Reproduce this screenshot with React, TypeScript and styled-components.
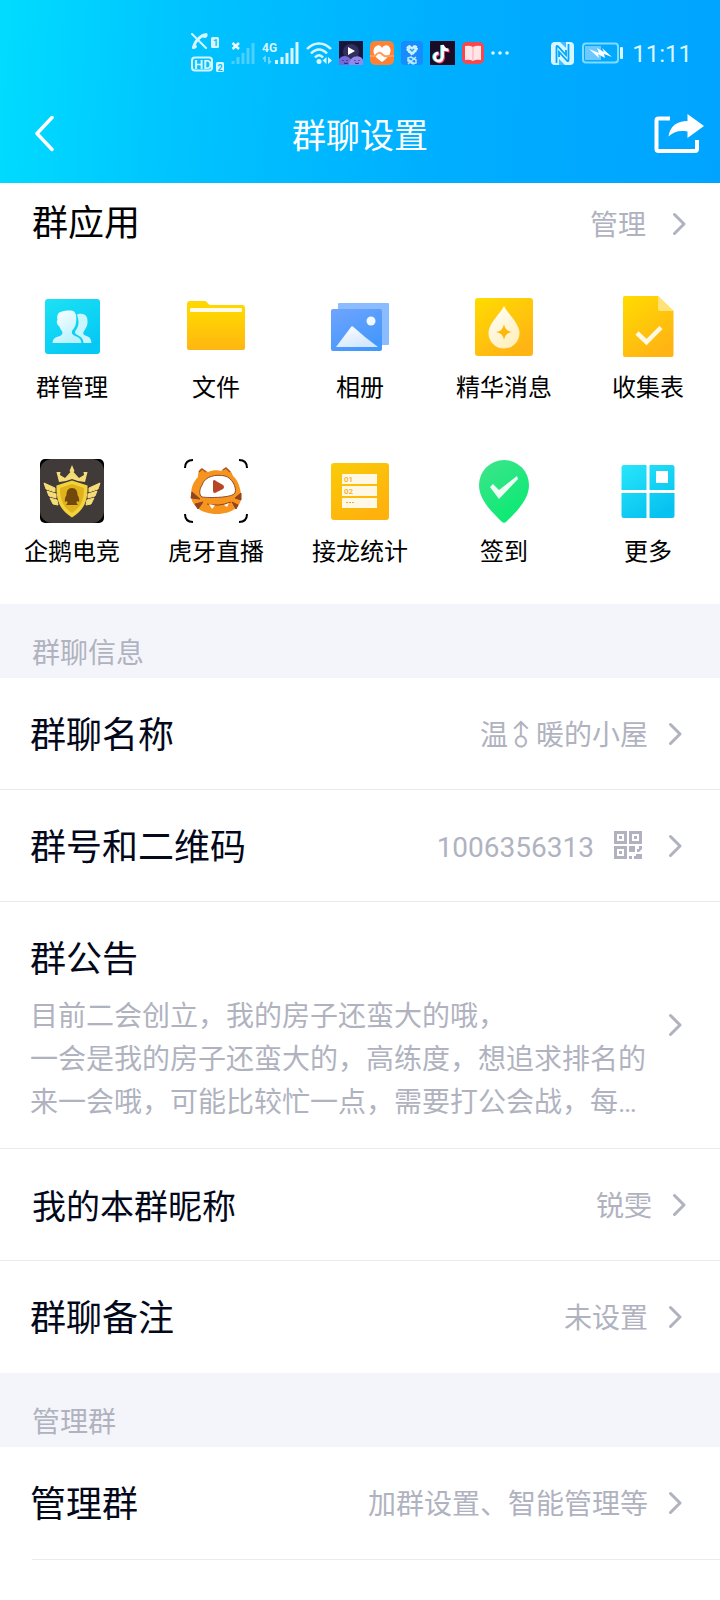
import React from 'react';
import styled, { createGlobalStyle } from 'styled-components';

const GlobalStyle = createGlobalStyle`
  *, *::before, *::after { box-sizing: border-box; }
  body {
    margin: 0;
    background: #ffffff;
    font-family: Roboto, "Noto Sans CJK SC", sans-serif;
    color: #03081a;
  }
  button {
    margin: 0;
    padding: 0;
    border: 0;
    background: none;
    color: inherit;
    font: inherit;
    text-align: left;
    cursor: pointer;
  }
  h1, h2, p { margin: 0; font-weight: 400; }
  svg { display: block; flex: none; }
`;

const Page = styled.div`
  width: 100%;
`;

const Header = styled.header`
  background: linear-gradient(94deg, #00dcff 0%, #00c4ff 25%, #00aeff 62%, #00a4ff 100%);
`;

const StatusBar = styled.div`
  display: flex;
  align-items: center;
  justify-content: flex-end;
  gap: 42px;
  height: 84px;
  padding: 22px 28px 0 0;
  color: #d8f6ff;
`;

const StatusGroup = styled.div<{ $gap: number }>`
  display: flex;
  align-items: center;
  gap: ${(p) => p.$gap}px;
`;

const Clock = styled.time`
  padding-top: 2px;
  font-size: 24px;
  line-height: 32px;
`;

const NavBar = styled.nav`
  display: grid;
  grid-template-columns: 1fr auto 1fr;
  align-items: center;
  height: 99px;
  padding: 0 16px;
  color: #ffffff;
`;

const NavTitle = styled.h1`
  padding-top: 4px;
  font-size: 34px;
  line-height: 48px;
`;

const NavButton = styled.button<{ $end?: boolean }>`
  justify-self: ${(p) => (p.$end ? 'end' : 'start')};
  padding-left: ${(p) => (p.$end ? 0 : 18)}px;
`;

const AppsSection = styled.section`
  padding-bottom: 34px;
  color: #000000;
`;

const AppsHeading = styled.div`
  display: flex;
  align-items: center;
  justify-content: space-between;
  height: 82px;
  padding: 0 34px 0 32px;
`;

const AppsTitle = styled.h2`
  font-size: 36px;
  line-height: 48px;
`;

const ManageButton = styled.button`
  display: flex;
  align-items: center;
  gap: 26px;
  color: #b0b3bf;
  font-size: 28px;
  line-height: 40px;
`;

const AppGrid = styled.div`
  display: grid;
  grid-template-columns: repeat(5, 1fr);
  row-gap: 53px;
  padding-top: 30px;
`;

const AppTile = styled.button`
  display: flex;
  flex-direction: column;
  align-items: center;
  gap: 11px;
  font-size: 24px;
  line-height: 36px;
`;

const SectionTitle = styled.h2`
  display: flex;
  align-items: flex-end;
  height: 74px;
  padding: 0 32px 4px;
  background: #f4f5fa;
  color: #b0b3bf;
  font-size: 28px;
  line-height: 40px;
`;

const Row = styled.button<{ $inset?: boolean; $line?: boolean }>`
  display: flex;
  align-items: center;
  justify-content: space-between;
  gap: 20px;
  width: 100%;
  min-height: 112px;
  padding: ${(p) => (p.$inset ? '0 34px 0 32px' : '0 38px 0 30px')};
  border-bottom: 1px solid ${(p) => (p.$line === false ? 'transparent' : '#e9eaee')};
`;

const RowLabel = styled.span<{ $small?: boolean }>`
  flex: none;
  padding-top: 4px;
  font-size: ${(p) => (p.$small ? 34 : 36)}px;
  line-height: 48px;
`;

const RowValue = styled.span`
  display: flex;
  align-items: center;
  justify-content: flex-end;
  gap: 20px;
  color: #b0b3bf;
  font-size: 28px;
  line-height: 40px;
`;

const ValueText = styled.span`
  padding-top: 4px;
`;

const UprightSign = styled.span`
  display: inline-block;
  transform: rotate(-45deg);
`;

const QrSlot = styled.span`
  padding-right: 6px;
`;

const NoticeBody = styled.span`
  display: flex;
  flex: 1;
  flex-direction: column;
  gap: 11px;
  min-width: 0;
  padding: 30px 0 24px;
`;

const NoticeText = styled.span`
  color: #b0b3bf;
  font-size: 28px;
  line-height: 43px;
  white-space: pre-line;
`;

const Divider = styled.hr`
  height: 1px;
  margin: 0 0 0 32px;
  border: 0;
  background: #e9eaee;
`;

const Chevron = () => (
  <svg width="14" height="24" viewBox="0 0 14 24" fill="none" stroke="#b0b3bf" strokeWidth="3" strokeLinecap="round" strokeLinejoin="round">
    <path d="M2.500 2.500 12 12 2.500 21.500" />
  </svg>
);

const QrIcon = () => (
  <svg width="28" height="29" viewBox="0 0 28 29" fill="#b0b3bf">
    <path fillRule="evenodd" d="M0 0H13V13H0ZM3 3V10H10V3ZM5 5H8V8H5ZM15 0H28V13H15ZM18 3V10H25V3ZM20 5H23V8H20ZM0 15H13V28H0ZM3 18V25H10V18ZM5 20H8V23H5ZM15 15H21V21H15ZM25 15H28V18L25 21H23V18H25ZM15 25H18V28H15ZM20 25H22V23H28V28H20Z" />
  </svg>
);

/* ---------- status bar ---------- */

const CallIcon = () => (
  <svg width="33" height="42" viewBox="0 0 33 42" fontFamily="Roboto, sans-serif" fontWeight="700">
    <path d="M1 2 15 16" stroke="#d8f6ff" strokeWidth="2" strokeLinecap="round" />
    <path d="M16 1C17 3 17 5 14.500 6L11.500 5.500C8.500 7.500 6 10 5 12.500L6 15C4 17.500 2 17 .800 16.500C2 9 8 1.500 16 1Z" fill="#d8f6ff" />
    <rect x="20" y="5" width="8" height="11" rx="1.500" fill="#d8f6ff" />
    <text x="22" y="14" fontSize="9" fill="#00bfff">1</text>
    <rect x="1" y="25.500" width="20" height="13" rx="3" fill="none" stroke="#d8f6ff" strokeWidth="2" />
    <text x="3" y="37" fontSize="13" fill="#d8f6ff">HD</text>
    <rect x="25" y="30" width="8" height="10" rx="1.500" fill="#d8f6ff" />
    <text x="26.500" y="38.500" fontSize="9" fill="#00bfff">2</text>
  </svg>
);

const NoSignalIcon = () => (
  <svg width="24" height="24" viewBox="0 0 24 24">
    <path d="M1.500 2 8 8M8 2 1.500 8" stroke="#e8faff" strokeWidth="2.500" />
    <path d="M2 23v-3M7 23v-7M12 23V12M17 23V7M22 23V2" stroke="#4dd0ff" strokeWidth="3" />
  </svg>
);

const SignalIcon = () => (
  <svg width="37" height="24" viewBox="0 0 37 24">
    <text x="0" y="11" fontFamily="Roboto, sans-serif" fontWeight="700" fontSize="12" fill="#d8f6ff">4G</text>
    <path d="M3 21v-5l-2 2M7 16v6l2-2" stroke="#7fdcff" strokeWidth="1.500" fill="none" />
    <path d="M14.500 23v-4M20 23v-7M25 23V12M30 23V7M35 23V1" stroke="#d8f6ff" strokeWidth="3" />
  </svg>
);

const WifiIcon = () => (
  <svg width="26" height="24" viewBox="0 0 26 24" fill="none" stroke="#d8f6ff" strokeWidth="2.500">
    <path d="M1 8C8 .500 18 .500 25 8M5 12.500C10 7 16 7 21 12.500M9 16.500C11.500 13.500 14.500 13.500 17 16.500" />
    <circle cx="13" cy="20.500" r="2.500" fill="#d8f6ff" stroke="none" />
    <path d="M20.500 16v7l-4-3.500ZM22 16v7l4-3.500Z" fill="#d8f6ff" stroke="none" />
  </svg>
);

const VideoAppIcon = () => (
  <svg width="24" height="24" viewBox="0 0 24 24">
    <rect width="24" height="24" fill="#17153a" />
    <circle cx="12" cy="11" r="8" fill="#3d3b6d" opacity=".7" />
    <path d="M9 6 16 10 9 14Z" fill="#ffffff" />
    <path d="M0 24V18C3 14 9 14 12 19V24Z" fill="#7669dc" />
    <path d="M10 24C10 14 22 13 24 19V24Z" fill="#9288ee" />
    <path d="M4 19v1M8 19v1M5 22q2 1 4 0M16 19v1M20 19v1M16 22q2 1 4 0" stroke="#28205e" fill="none" />
  </svg>
);

const HealthAppIcon = () => (
  <svg width="24" height="24" viewBox="0 0 24 24">
    <rect width="24" height="24" rx="5" fill="#ff8136" />
    <path d="M12 21C3 15 2 10 5 6C8 3 11 4 12 7C14 4 18 3 20 7C22 11 19 16 12 21Z" fill="#ffffff" />
    <path d="M0 15H5C8 11 10 11 13 14C15 16 18 15 18 15H24" fill="none" stroke="#ff9c55" strokeWidth="2" />
  </svg>
);

const HeartAppIcon = () => (
  <svg width="22" height="24" viewBox="0 0 22 24">
    <rect width="22" height="24" rx="4" fill="#168cff" />
    <path d="M11 14C5 10 5 7 7 5C9 4 10 5 11 7C12 4 15 4 16 6C17 9 15 11 11 14Z" fill="#c5f0ff" stroke="#ffffff" strokeDasharray="2 1" />
    <path d="M7 17 10 16 15 19 15 22 12 23 7 20ZM7 23 15 16M7 18 14 23" fill="none" stroke="#b8eaff" strokeWidth="1.500" />
    <path d="M9 8 11 10 13 8" fill="none" stroke="#2999ff" strokeWidth="1.500" />
  </svg>
);

const NoteAppIcon = () => (
  <svg width="25" height="24" viewBox="0 0 25 24" fill="none" strokeWidth="2.800">
    <rect width="25" height="24" fill="#1c0b24" />
    <path d="M11.500 4V15.500A4 4 0 1 1 7.500 12M11.500 4C12 7 14.500 9 17.500 9" stroke="#28e0e0" />
    <path d="M13.500 5V16.500A4 4 0 1 1 9.500 13M13.500 5C14 8 16.500 10 19.500 10" stroke="#f0406c" />
    <path d="M12.500 4V15.500A4 4 0 1 1 8.500 12M12.500 4C13 7 15.500 9 18.500 9" stroke="#ffffff" />
  </svg>
);

const ReaderAppIcon = () => (
  <svg width="22" height="22" viewBox="0 0 22 22">
    <rect width="22" height="22" rx="5" fill="#f5484f" />
    <path d="M3 4Q8 3 11 5Q14 3 19 4V18Q14 17 11 19Q8 17 3 18Z" fill="#ffe4e8" />
    <path d="M11 5V18" stroke="#f7a9b2" />
  </svg>
);

const MoreDots = () => (
  <svg width="18" height="4" viewBox="0 0 18 4" fill="#d8f6ff">
    <circle cx="2" cy="2" r="1.800" />
    <circle cx="9" cy="2" r="1.800" />
    <circle cx="16" cy="2" r="1.800" />
  </svg>
);

const NfcIcon = () => (
  <svg width="23" height="23" viewBox="0 0 23 23">
    <rect width="23" height="23" rx="4" fill="#d8f6ff" />
    <path d="M5.500 21V5Q5.500 3 7 4.500L15 13V8M17.500 2V18Q17.500 20 16 18.500L8 10V15" fill="none" stroke="#00a8ff" strokeWidth="1.800" />
    <path d="M9 0 15 6V0ZM8 23V17L14 23Z" fill="#00a8ff" opacity=".7" />
  </svg>
);

const BatteryIcon = () => (
  <svg width="42" height="22" viewBox="0 0 42 22">
    <rect x="1" y="1.500" width="35" height="19" rx="3" fill="none" stroke="#7fdcff" strokeWidth="2" />
    <rect x="3" y="4" width="16" height="14" fill="#6cc9ff" />
    <path d="M7 7 17 11 15 6 22 10 20 6 30 15 22 12 23 16 16 12 17 16Z" fill="#ffffff" />
    <rect x="38" y="5" width="3" height="12" rx="1" fill="#d8f6ff" />
  </svg>
);

/* ---------- navigation ---------- */

const BackIcon = () => (
  <svg width="20" height="38" viewBox="0 0 20 38" fill="none" stroke="#ffffff" strokeWidth="3.500" strokeLinecap="round" strokeLinejoin="round">
    <path d="M18 2.500 3 18.500 18 34.500" />
  </svg>
);

const ShareIcon = () => (
  <svg width="50" height="40" viewBox="0 0 50 40">
    <path d="M16 4.500H4.500Q2.500 4.500 2.500 6.500V35Q2.500 37 4.500 37H41Q43 37 43 35V26" fill="none" stroke="#ffffff" strokeWidth="4" />
    <path d="M33.500 0 50 12 33.500 24V17.500C25 16 19 18 14.500 22.500C16 12 23 7 33.500 7Z" fill="#ffffff" />
  </svg>
);

/* ---------- group apps ---------- */

const Art = ({ children }: { children: React.ReactNode }) => (
  <svg width="64" height="64" viewBox="0 0 64 64">{children}</svg>
);

const Gradient = ({ id, from, to }: { id: string; from: string; to: string }) => (
  <linearGradient id={id} x1="0" y1="0" x2=".6" y2="1">
    <stop offset="0" stopColor={from} />
    <stop offset="1" stopColor={to} />
  </linearGradient>
);

const ManageArt = () => (
  <Art>
    <Gradient id="manage" from="#1ce2f4" to="#06c8f4" />
    <Gradient id="person" from="#ffffff" to="#b9f1fd" />
    <rect x="5" y="4" width="55" height="55" rx="3" fill="url(#manage)" />
    <path d="M38.500 19C45 18 48 21.500 47.500 27C47.500 32 45 34 43.500 37C42.500 39 44 40 46.500 41C50 42 51 44 51.500 48H43.500C43 43 41 42 37.500 40C34.500 38.500 34.500 37 36 35C38 32 38.500 30 38.500 27C38.500 24 37.500 22 37 19.500Z" fill="#c9f6fd" />
    <path d="M18 19C19 16 32 14 34.500 17C37 20 36.500 26 35.500 30C34.500 33 33 34 32 36C31.500 38 32 39.500 35 41C39 42.500 41 43.500 41.500 48H12.500C13 43.500 14.500 43 17 42C20 41 22.500 40 22.500 38C22.500 36 20 34 19 31C17 30 16 26 17.500 25C17 23 17 21 18 19Z" fill="url(#person)" />
  </Art>
);

const FolderArt = () => (
  <Art>
    <linearGradient id="folder" x1="0" y1="0" x2="0" y2="1">
      <stop offset=".2" stopColor="#ffd700" />
      <stop offset="1" stopColor="#ffb612" />
    </linearGradient>
    <path d="M3 9Q3 6 6 6H21C23 6 24 10 27 10H58Q61 10 61 13V53Q61 55 59 55H6Q3 55 3 53Z" fill="url(#folder)" />
    <rect x="6" y="13" width="52" height="4" rx="1" fill="#fffbe8" />
  </Art>
);

const AlbumArt = () => (
  <Art>
    <Gradient id="album" from="#6fa4ff" to="#4398fb" />
    <Gradient id="hill" from="#ffffff" to="#d3e6ff" />
    <rect x="10" y="8" width="51" height="42" rx="1" fill="#8abcff" />
    <rect x="3" y="14" width="51" height="42" rx="2" fill="url(#album)" />
    <circle cx="43" cy="26" r="4.500" fill="#f2f8ff" />
    <path d="M8 52 23 32Q24 30.500 25.500 32L37 42 50 52Z" fill="url(#hill)" />
  </Art>
);

const EssenceArt = () => (
  <Art>
    <Gradient id="essence" from="#ffdc00" to="#ffb414" />
    <Gradient id="drop" from="#ffffff" to="#fff0bd" />
    <rect x="3" y="3" width="58" height="58" rx="3" fill="url(#essence)" />
    <path d="M32 11C35 18 47.500 28 47.500 38A15.500 15.500 0 0 1 16.500 38C16.500 28 29 18 32 11Z" fill="url(#drop)" />
    <path d="M32 29Q33 36 40 37Q33 38 32 45Q31 38 24 37Q31 36 32 29Z" fill="#fcb90b" />
  </Art>
);

const FormArt = () => (
  <Art>
    <Gradient id="form" from="#ffdc00" to="#ffb414" />
    <path d="M7 3Q7 1 9 1H42L57.500 16V60Q57.500 62 55.500 62H9Q7 62 7 60Z" fill="url(#form)" />
    <path d="M42 1 57.500 16H44Q42 16 42 14Z" fill="#ffe278" />
    <path d="M21 38 30.500 47 45 32.500" fill="none" stroke="#fff9e6" strokeWidth="4.500" />
  </Art>
);

const EsportsArt = () => (
  <Art>
    <rect width="64" height="64" rx="5" fill="#000000" />
    <rect width="64" height="64" rx="12" fill="#403b39" />
    <path d="M32 6 34.500 12 33.500 13 39 19 44 16 43.500 13 47.500 13 45 23 38 22 32 20 26 22 19 23 16.500 13 20.500 13 20 16 25 19 30.500 13 29.500 12Z" fill="#f6dc79" />
    <path d="M4 24 15 29V33L6 30ZM7 32 16 35V39L9 37ZM10 39 17 41 18 46 13 45ZM60 24 49 29V33L58 30ZM57 32 48 35V39L55 37ZM54 39 47 41 46 46 51 45Z" fill="#f6dc79" stroke="#f6dc79" strokeWidth="1" />
    <path d="M32 21.500 47.500 26.500C48 42 44 51 32 58.500C20 51 16 42 16.500 26.500Z" fill="#f4d23c" />
    <path d="M32 25 44 29C44 41 41 48 32 54C23 48 20 41 20 29Z" fill="#dfb31c" />
    <path d="M32 29C36 29 37.500 32 37.500 36C39 38 39.500 41 39 43L37 42 36.500 44 38 46H26L27.500 44 27 42 25 43C24.500 41 25 38 26.500 36C26.500 32 28 29 32 29Z" fill="#72480c" />
  </Art>
);

const TigerArt = () => (
  <Art>
    <path d="M1 9C1 4 4 1 9 1M55 1C60 1 63 4 63 9M1 55C1 60 4 63 9 63M55 63C60 63 63 60 63 55" fill="none" stroke="#000000" strokeWidth="2" />
    <path d="M14 18C14 12 16 9 18 10C21 11 22 12 24 13C28 11 34 11 37 12C39 9 43 8 45 11C48 13 48 15 49 17C54 21 57 30 57 37C58 48 47 55 33 55C16 55 7 46 7 36C7 28 10 22 14 18Z" fill="#f7941d" />
    <path d="M15 13 18 10 22 13M39 11 42 9 46 13" fill="none" stroke="#a8572c" strokeWidth="1.500" />
    <path d="M18 26C21 17 32 15 41 17C48 19 53 28 51 34C48 39 25 39 18 38C15 36 15 31 18 26Z" fill="#ffffff" stroke="#8b4b2b" strokeWidth="1" />
    <path d="M29 22Q30 20 32 22L39 26Q41 28 39 30L31 34Q29 34 29 32Z" fill="#b74627" />
    <path d="M8 33 16 40 7 39ZM11 45 19 43 14 50ZM57 34 51 39 57 41ZM54 46 48 43 52 50Z" fill="#8f4423" stroke="#8f4423" strokeWidth="1" />
    <path d="M23 45Q34 48 47 43" fill="none" stroke="#8f4423" strokeWidth="1" />
    <path d="M25 45 31 46.500 28 50ZM40 46 45 44 43 48Z" fill="#ffffff" />
  </Art>
);

const ChainArt = () => (
  <Art>
    <Gradient id="chain" from="#f9cc08" to="#ffb10d" />
    <rect x="3" y="4" width="58" height="57" rx="3" fill="url(#chain)" />
    <path d="M14 15H49V25H14ZM14 27H49V37H14ZM14 39H49V49H14Z" fill="#fff8e5" />
    <g fill="#f5ad1c" fontFamily="Roboto, sans-serif" fontSize="8" fontWeight="500">
      <text x="16" y="23">01</text>
      <text x="16" y="35">02</text>
      <path d="M18 43h2v1h-2ZM21 43h2v1h-2ZM24 43h2v1h-2Z" />
    </g>
  </Art>
);

const CheckInArt = () => (
  <Art>
    <Gradient id="pin" from="#3fe48c" to="#0bea73" />
    <path d="M32 1A25 25 0 0 1 57 26C57 41 44 53 34 63Q32 64.500 30 63C20 53 7 41 7 26A25 25 0 0 1 32 1Z" fill="url(#pin)" />
    <path d="M18 28 21 25 27 31 45 17 46 20 27 40Z" fill="#eefff5" />
  </Art>
);

const MoreArt = () => (
  <Art>
    <Gradient id="more" from="#28e6fb" to="#06c2f0" />
    <path fillRule="evenodd" d="M8 6H30.500V31H5.500V8.500Q5.500 6 8 6ZM33.500 6H56Q58.500 6 58.500 8.500V31H33.500ZM40 12V24H52V12ZM5.500 34H30.500V59H8Q5.500 59 5.500 56.500ZM33.500 34H58.500V56.500Q58.500 59 56 59H33.500Z" fill="url(#more)" />
  </Art>
);

const apps = [
  { name: '群管理', Icon: ManageArt },
  { name: '文件', Icon: FolderArt },
  { name: '相册', Icon: AlbumArt },
  { name: '精华消息', Icon: EssenceArt },
  { name: '收集表', Icon: FormArt },
  { name: '企鹅电竞', Icon: EsportsArt },
  { name: '虎牙直播', Icon: TigerArt },
  { name: '接龙统计', Icon: ChainArt },
  { name: '签到', Icon: CheckInArt },
  { name: '更多', Icon: MoreArt },
];

const notice =
  '目前二会创立，我的房子还蛮大的哦，\n一会是我的房子还蛮大的，高练度，想追求排名的\n来一会哦，可能比较忙一点，需要打公会战，每…';

type SettingProps = {
  label: string;
  value: React.ReactNode;
  qr?: boolean;
  inset?: boolean;
  line?: boolean;
};

const Setting = ({ label, value, qr, inset, line }: SettingProps) => (
  <Row type="button" $inset={inset} $line={line}>
    <RowLabel $small={inset}>{label}</RowLabel>
    <RowValue>
      <ValueText>{value}</ValueText>
      {qr && (
        <QrSlot>
          <QrIcon />
        </QrSlot>
      )}
      <Chevron />
    </RowValue>
  </Row>
);

export default function App() {
  return (
    <Page lang="zh-CN">
      <GlobalStyle />
      <Header>
        <StatusBar>
          <StatusGroup $gap={7}>
            <CallIcon />
            <NoSignalIcon />
            <SignalIcon />
            <WifiIcon />
            <VideoAppIcon />
            <HealthAppIcon />
            <HeartAppIcon />
            <NoteAppIcon />
            <ReaderAppIcon />
            <MoreDots />
          </StatusGroup>
          <StatusGroup $gap={8}>
            <NfcIcon />
            <BatteryIcon />
            <Clock>11:11</Clock>
          </StatusGroup>
        </StatusBar>
        <NavBar>
          <NavButton type="button" aria-label="返回">
            <BackIcon />
          </NavButton>
          <NavTitle>群聊设置</NavTitle>
          <NavButton type="button" aria-label="分享" $end>
            <ShareIcon />
          </NavButton>
        </NavBar>
      </Header>

      <main>
        <AppsSection>
          <AppsHeading>
            <AppsTitle>群应用</AppsTitle>
            <ManageButton type="button">
              <ValueText>管理</ValueText>
              <Chevron />
            </ManageButton>
          </AppsHeading>
          <AppGrid>
            {apps.map(({ name, Icon }) => (
              <AppTile type="button" key={name}>
                <Icon />
                {name}
              </AppTile>
            ))}
          </AppGrid>
        </AppsSection>

        <section>
          <SectionTitle>群聊信息</SectionTitle>
          <Setting
            label="群聊名称"
            value={
              <>
                温<UprightSign>♂</UprightSign>暖的小屋
              </>
            }
          />
          <Setting label="群号和二维码" value="1006356313" qr />
          <Row type="button">
            <NoticeBody>
              <RowLabel>群公告</RowLabel>
              <NoticeText>{notice}</NoticeText>
            </NoticeBody>
            <Chevron />
          </Row>
          <Setting label="我的本群昵称" value="锐雯" inset />
          <Setting label="群聊备注" value="未设置" line={false} />
        </section>

        <section>
          <SectionTitle>管理群</SectionTitle>
          <Setting label="管理群" value="加群设置、智能管理等" line={false} />
          <Divider />
        </section>
      </main>
    </Page>
  );
}
